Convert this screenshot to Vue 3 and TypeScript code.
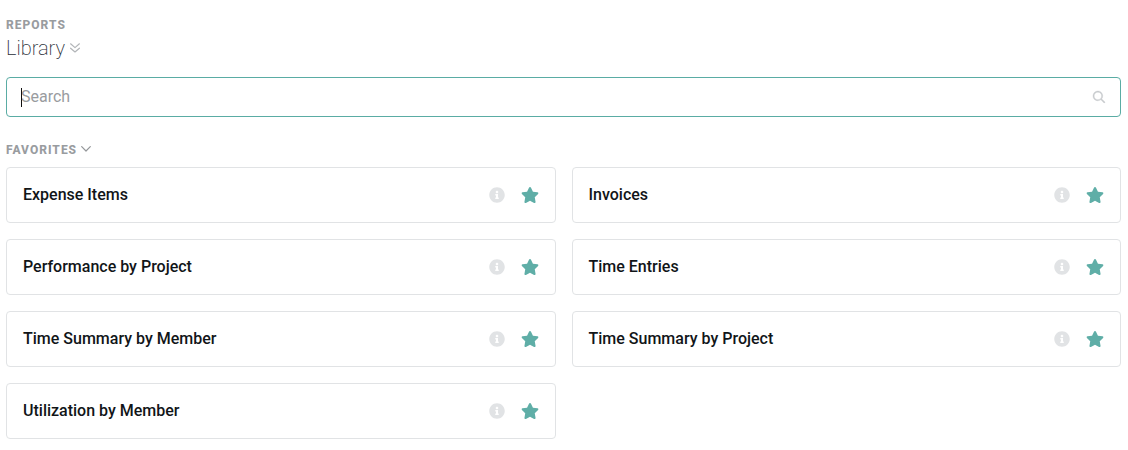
<script setup lang="ts">
import { computed, ref } from 'vue'

interface Report {
  name: string
  favorite: boolean
}

const query = ref('')
const open = ref(true)
const reports = ref<Report[]>([
  { name: 'Expense Items', favorite: true },
  { name: 'Invoices', favorite: true },
  { name: 'Performance by Project', favorite: true },
  { name: 'Time Entries', favorite: true },
  { name: 'Time Summary by Member', favorite: true },
  { name: 'Time Summary by Project', favorite: true },
  { name: 'Utilization by Member', favorite: true },
])

const visible = computed(() =>
  reports.value.filter((r) => r.name.toLowerCase().includes(query.value.trim().toLowerCase())),
)
</script>

<template>
  <main class="page">
    <header class="heading">
      <p class="overline">Reports</p>
      <h1 class="title">
        <button type="button" class="title-button">
          Library
          <svg class="double-chevron" viewBox="0 0 10 10" aria-hidden="true">
            <path d="M0.6 0.8 5 4.6 9.4 0.8M0.6 5.2 5 9 9.4 5.2" />
          </svg>
        </button>
      </h1>
    </header>

    <div class="search">
      <input v-model="query" class="search-input" type="text" placeholder="Search" aria-label="Search" />
      <span v-if="!query" class="caret" aria-hidden="true"></span>
      <svg class="search-icon" viewBox="0 0 512 512" aria-hidden="true">
        <path d="M508.500 468.900 387.100 347.500c-2.300-2.300-5.300-3.500-8.500-3.500h-13.200c31.500-36.500 50.600-84 50.600-136C416 93.100 322.900 0 208 0S0 93.100 0 208s93.100 208 208 208c52 0 99.500-19.100 136-50.600v13.200c0 3.200 1.300 6.200 3.500 8.500l121.400 121.400c4.700 4.700 12.300 4.700 17 0l22.600-22.600c4.700-4.700 4.700-12.300 0-17zM208 368c-88.400 0-160-71.600-160-160S119.600 48 208 48s160 71.600 160 160-71.600 160-160 160z" />
      </svg>
    </div>

    <section>
      <h2 class="section-title">
        <button type="button" class="section-button" :aria-expanded="open" @click="open = !open">
          Favorites
          <svg class="chevron" viewBox="0 0 10 8" aria-hidden="true">
            <path d="M0.7 0.7 5 5 9.300 0.7" />
          </svg>
        </button>
      </h2>
      <ul v-if="open" class="cards">
        <li v-for="report in visible" :key="report.name" class="card">
          <a class="name" href="#">{{ report.name }}</a>
          <button type="button" class="icon-button info" :aria-label="`About ${report.name}`">
            <svg viewBox="0 0 512 512" aria-hidden="true">
              <path d="M256 8C119.043 8 8 119.083 8 256c0 136.997 111.043 248 248 248s248-111.003 248-248C504 119.083 392.957 8 256 8zm0 110c23.196 0 42 18.804 42 42s-18.804 42-42 42-42-18.804-42-42 18.804-42 42-42zm56 254c0 6.627-5.373 12-12 12h-88c-6.627 0-12-5.373-12-12v-24c0-6.627 5.373-12 12-12h12v-64h-12c-6.627 0-12-5.373-12-12v-24c0-6.627 5.373-12 12-12h64c6.627 0 12 5.373 12 12v100h12c6.627 0 12 5.373 12 12v24z" />
            </svg>
          </button>
          <button
            type="button"
            class="icon-button star"
            :aria-label="`Favorite ${report.name}`"
            :aria-pressed="report.favorite"
            @click="report.favorite = !report.favorite"
          >
            <svg viewBox="0 0 576 512" aria-hidden="true">
              <path d="M259.300 17.800 194 150.200 47.900 171.500c-26.200 3.800-36.700 36.100-17.700 54.600l105.700 103-25 145.500c-4.500 26.300 23.200 46 46.400 33.700L288 439.600l130.700 68.700c23.200 12.200 50.900-7.400 46.400-33.700l-25-145.500 105.700-103c19-18.500 8.500-50.800-17.700-54.600L382 150.200 316.700 17.800c-11.700-23.600-45.600-23.900-57.400 0z" />
            </svg>
          </button>
        </li>
      </ul>
    </section>
  </main>
</template>

<style>
body {
  margin: 0;
  background: #fff;
}
</style>

<style scoped>
.page {
  padding: 17px 7px 10px 6px;
  font-family: Roboto, 'Liberation Sans', sans-serif;
  color: #111518;
}

.page * {
  box-sizing: border-box;
}

button {
  padding: 0;
  border: 0;
  background: none;
  font: inherit;
  letter-spacing: inherit;
  text-transform: inherit;
  color: inherit;
  cursor: pointer;
}

.overline,
.section-title {
  margin: 0;
  font-size: 12px;
  font-weight: 800;
  line-height: 16px;
  letter-spacing: 1px;
  text-transform: uppercase;
  color: #999c9f;
}

.title {
  margin: 0;
  font-size: 20px;
  font-weight: 200;
  line-height: 30px;
  color: #2a2e38;
}

.title-button,
.section-button {
  display: flex;
  align-items: center;
  gap: 5px;
}

.section-button {
  gap: 4px;
}

svg {
  display: block;
  fill: currentColor;
}

.double-chevron,
.chevron {
  width: 10px;
  fill: none;
  stroke: #94979a;
  stroke-width: 1.2;
  stroke-linecap: round;
  stroke-linejoin: round;
}

.double-chevron {
  stroke: #b2b5b8;
}

.search {
  position: relative;
  margin: 14px 0 25px;
}

.search-input {
  display: block;
  width: 100%;
  height: 40px;
  padding: 0 40px 2px 14px;
  border: 1px solid #5aaca4;
  border-radius: 4px;
  outline: 0;
  background: #fff;
  font: 400 16px/24px Roboto, 'Liberation Sans', sans-serif;
  color: #111518;
  caret-color: transparent;
}

.search-input::placeholder {
  color: #999c9f;
  opacity: 1;
}

.caret {
  position: absolute;
  top: 11px;
  left: 15px;
  width: 1px;
  height: 19px;
  background: #111;
}

.search-icon {
  position: absolute;
  top: 14px;
  right: 16px;
  width: 12px;
  height: 12px;
  overflow: visible;
  color: #c8cbce;
  stroke: currentColor;
  stroke-width: 16;
}

.cards {
  display: grid;
  grid-template-columns: repeat(2, minmax(0, 1fr));
  gap: 16px;
  margin: 9px 0 0;
  padding: 0;
  list-style: none;
}

.card {
  display: flex;
  align-items: center;
  height: 56px;
  padding: 0 16px;
  border: 1px solid #e1e3e5;
  border-radius: 4px;
}

.name {
  flex: 1;
  font-size: 16px;
  font-weight: 500;
  line-height: 24px;
  color: inherit;
  text-decoration: none;
}

.info svg {
  width: 16px;
  height: 16px;
  color: #e1e3e5;
}

.star {
  margin-left: 16px;
}

.star svg {
  width: 18px;
  height: 16px;
  color: #5faea7;
}
</style>
